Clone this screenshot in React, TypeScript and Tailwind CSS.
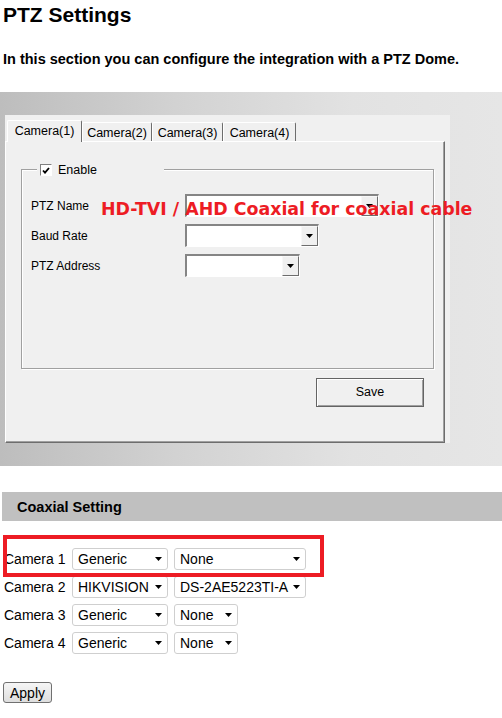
const Arrow = () => (
  <svg width="7" height="4" viewBox="0 0 7 4" fill="#000">
    <path d="M0 0h7L3.5 4z" />
  </svg>
);

const WinSelect = ({ w }: { w: string }) => (
  <div
    className={`${w} h-[23px] flex justify-end bg-white border-t-2 border-l-2 border-t-[#858585] border-l-[#858585] border-b border-r border-b-white border-r-white`}
  >
    <div className="w-[17px] h-full bg-[#f0f0f0] border-t border-l border-t-[#f8f8f8] border-l-[#f8f8f8] border-b border-r border-b-[#6d6d6d] border-r-[#6d6d6d] flex items-center justify-center">
      <Arrow />
    </div>
  </div>
);

const CoaxSelect = ({ w, text }: { w: string; text: string }) => (
  <div
    className={`${w} h-[22px] flex items-center justify-between bg-white border border-[#cfcfcf] rounded-[3px] pl-[5px] pr-[5px] text-[14px] text-black`}
  >
    <span className="whitespace-nowrap">{text}</span>
    <Arrow />
  </div>
);

const tabs = [
  { label: 'Camera(2)', w: 'w-[70px]' },
  { label: 'Camera(3)', w: 'w-[71px]' },
  { label: 'Camera(4)', w: 'w-[73px]' },
];

const rows = [
  { cam: 'Camera 1', a: 'Generic', b: 'None', bw: 'w-[132px]' },
  { cam: 'Camera 2', a: 'HIKVISION', b: 'DS-2AE5223TI-A', bw: 'w-[132px]' },
  { cam: 'Camera 3', a: 'Generic', b: 'None', bw: 'w-[64px]' },
  { cam: 'Camera 4', a: 'Generic', b: 'None', bw: 'w-[64px]' },
];

export default function App() {
  return (
    <div className="w-[502px] h-[718px] bg-white overflow-hidden flex flex-col font-['Liberation_Sans',Arial,sans-serif] text-black">
      <h1 className="pt-[3px] pl-[3px] text-[21px] leading-[24px] font-bold">PTZ Settings</h1>
      <p className="mt-[24px] pl-[3px] text-[14.5px] leading-[16px] font-bold whitespace-nowrap">
        In this section you can configure the integration with a PTZ Dome.
      </p>

      {/* grey band with the tab panel */}
      <div className="mt-[25px] h-[374px] pt-[23px] pl-[5px] bg-[linear-gradient(to_right,#bdbdbd,#d2d2d2_35%,#e2e2e2_70%,#e6e6e6)]">
        <div className="w-[445px] h-[328px] bg-[#f0f0f0] flex flex-col">
          <div className="h-[26px] flex items-end pl-[2px] text-[12.5px]">
            <div className="relative z-10 -mb-px h-[22px] w-[75px] bg-[#f0f0f0] border-t border-l border-white border-r border-r-[#6d6d6d] rounded-t-[2px] flex justify-center pt-[3px] leading-[14px]">
              Camera(1)
            </div>
            {tabs.map((t) => (
              <div
                key={t.label}
                className={`${t.w} h-[19px] bg-[#f0f0f0] border-t border-l border-white border-r border-r-[#6d6d6d] rounded-t-[2px] flex justify-center pt-[3px] leading-[14px]`}
              >
                {t.label}
              </div>
            ))}
          </div>

          <div className="w-[440px] flex-1 border-t border-l border-white border-r border-b border-r-[#6d6d6d] border-b-[#6d6d6d] shadow-[inset_-1px_-1px_0_#a0a0a0]">
            <div className="relative ml-[15px] mt-[27px] w-[413px] h-[200px] border border-[#a0a0a0] shadow-[1px_1px_0_#fff,inset_1px_1px_0_#fff]">
              <div className="absolute left-[15px] top-[-7px] w-[127px] h-[14px] bg-[#f0f0f0] flex items-center text-[12.5px]">
                <div className="ml-[3px] w-[12px] h-[12px] bg-white border-t border-l border-[#808080] border-b border-r border-b-white border-r-white flex items-center justify-center">
                  <svg width="8" height="7" viewBox="0 0 8 7" fill="none" stroke="#000" strokeWidth="1.8">
                    <path d="M1 3.5l2 2.2L7 1" />
                  </svg>
                </div>
                <span className="ml-[6px] leading-[14px]">Enable</span>
              </div>

              <div className="pt-[24px] pl-[9px] flex flex-col gap-[7px] text-[12px]">
                <div className="relative flex items-center">
                  <span className="w-[154px]">PTZ Name</span>
                  <WinSelect w="w-[194px]" />
                  <span className="absolute left-[70px] top-[7px] text-[17.4px] leading-[17px] font-bold text-[#ed1c24] whitespace-nowrap font-['DejaVu_Sans',Verdana,sans-serif]">
                    HD-TVI / AHD Coaxial for coaxial cable
                  </span>
                </div>
                <div className="flex items-center">
                  <span className="w-[154px]">Baud Rate</span>
                  <WinSelect w="w-[134px]" />
                </div>
                <div className="flex items-center">
                  <span className="w-[154px]">PTZ Address</span>
                  <WinSelect w="w-[115px]" />
                </div>
              </div>
            </div>

            <button className="mt-[9px] ml-[310px] w-[108px] h-[29px] bg-[#f0f0f0] border border-[#646464] shadow-[inset_1px_1px_0_#fff,inset_-1px_-1px_0_#a0a0a0] text-[12.5px] flex items-center justify-center">
              Save
            </button>
          </div>
        </div>
      </div>

      {/* coaxial section */}
      <div className="mt-[26px] ml-[2px] h-[29px] bg-[#c0c0c0] flex items-center pl-[15px] text-[14.5px] leading-[16px] font-bold">
        Coaxial Setting
      </div>

      <div className="relative mt-[27px] flex flex-col gap-[6px] pl-[4px]">
        {rows.map((r) => (
          <div key={r.cam} className="flex items-center h-[22px]">
            <span className="w-[68px] text-[14px] leading-[16px]">{r.cam}</span>
            <CoaxSelect w="w-[96px]" text={r.a} />
            <div className="w-[6px]" />
            <CoaxSelect w={r.bw} text={r.b} />
          </div>
        ))}
        <div className="absolute left-[3px] top-[-13px] w-[321px] h-[42px] border-4 border-[#ed1c24]" />
      </div>

      <div className="mt-[28px] ml-[3px]">
        <button className="w-[49px] h-[21px] rounded-[3px] border border-[#707070] bg-[linear-gradient(#f6f6f6,#dedede)] text-[14px] leading-[16px] flex items-center justify-center">
          Apply
        </button>
      </div>
    </div>
  );
}
